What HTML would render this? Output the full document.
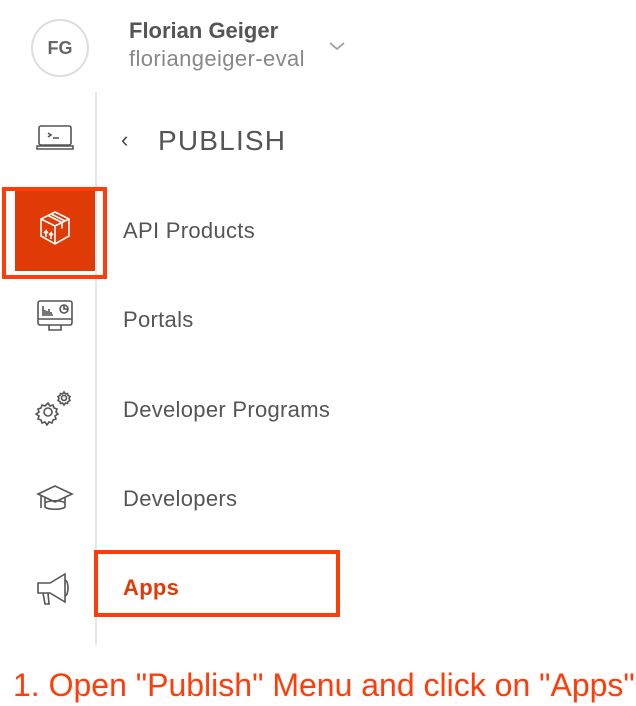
<!DOCTYPE html>
<html><head><meta charset="utf-8"><style>
*{margin:0;padding:0;box-sizing:border-box}
body{width:636px;height:706px;background:#fff;position:relative;overflow:hidden;font-family:"Liberation Sans",sans-serif;color:#555}
.a{position:absolute}
.item{position:absolute;left:123px;font-size:22px;color:#555;letter-spacing:0.3px;line-height:24px}
svg{position:absolute;fill:none;stroke:#555;stroke-width:1.6}
</style></head><body>
<div class="a" style="left:31px;top:19px;width:58px;height:58px;border:2px solid #ddd;border-radius:50%;text-align:center;line-height:54px;font-weight:bold;font-size:18px;color:#666">FG</div>
<div class="a" style="left:129px;top:18px;font-size:22px;font-weight:bold;color:#555">Florian Geiger</div>
<div class="a" style="left:129px;top:46px;font-size:22px;letter-spacing:0.4px;color:#888">floriangeiger-eval</div>
<svg style="left:328px;top:40px" width="18" height="12" viewBox="0 0 18 12"><path d="M2 3l7 6 7-6" stroke="#999"/></svg>
<div class="a" style="left:95px;top:92px;width:2px;height:553px;background:#e6e6e6"></div>
<svg style="left:36px;top:124px" width="38" height="28" viewBox="0 0 38 28"><rect x="3" y="2" width="32" height="19" rx="2"/><path d="M1 22h36v3H1z"/><path d="M12 9l3 2-3 2M17 14h6"/></svg>
<div class="a" style="left:15px;top:191px;width:80px;height:80px;background:#e03a06"></div>
<div class="a" style="left:2px;top:187px;width:105px;height:92px;border:4px solid #ff3d0b"></div>
<svg style="left:36px;top:209px;stroke:#fff;stroke-width:1.6" width="38" height="38" viewBox="0 0 38 38"><path d="M19 3l14 7v17l-14 8-14-8V10z"/><path d="M5 10l14 7 14-7M19 17v18"/><path d="M12 6.5l14 7v6M15 5l14 7"/><path d="M10 28v-6l-2 2M10 22l2 2M15 30v-6l-2 2M15 24l2 2"/></svg>
<svg style="left:36px;top:299px" width="38" height="36" viewBox="0 0 38 36"><rect x="2" y="2" width="34" height="24" rx="2"/><path d="M2 20h34M13 26v5h12v-5M7 7v9h10M9 15v-4M11 15v-3M13 15v-5M15 15v-2"/><circle cx="28" cy="10" r="4"/><path d="M28 6v4h4"/></svg>
<svg style="left:35px;top:390px" width="40" height="36" viewBox="0 0 40 36"><circle cx="13" cy="22" r="4"/><path d="M13 13l2 3 3-1 1 3 3 1-1 3 2 2-3 2 1 3-3 1-1 3-3-1-2 3-2-3-3 1-1-3-3-1 1-3-3-2 3-2-1-3 3-1 1-3 3 1z"/><circle cx="29" cy="8" r="2.5"/><path d="M29 2l1.5 2 2-.5.5 2 2 1-1 2 1 2-2 1-.5 2-2-.5-1.5 2-1.5-2-2 .5-.5-2-2-1 1-2-1-2 2-1 .5-2 2 .5z"/></svg>
<svg style="left:36px;top:484px" width="38" height="30" viewBox="0 0 38 30"><path d="M2 10l17-8 17 8-17 8z"/><path d="M9 14v9c3 3 17 3 20 0v-9M5 12v12M29 19c-4-3-16-3-20 0"/></svg>
<svg style="left:36px;top:572px" width="38" height="34" viewBox="0 0 38 34"><path d="M2 11h12l15-9v28L14 21H2z"/><path d="M29 8c4 1 4 15 0 16M7 21l2 11h4l-1-11"/></svg>
<div class="a" style="left:121px;top:127px;font-size:22px;color:#444">‹</div>
<div class="a" style="left:158px;top:125px;font-size:28px;letter-spacing:1.2px;color:#555">PUBLISH</div>
<div class="item" style="top:219px">API Products</div>
<div class="item" style="top:308px">Portals</div>
<div class="item" style="top:398px">Developer Programs</div>
<div class="item" style="top:487px">Developers</div>
<div class="item" style="top:576px;color:#e03a06;font-weight:bold">Apps</div>
<div class="a" style="left:94px;top:550px;width:246px;height:67px;border:4px solid #ff3d0b"></div>
<div class="a" style="left:13px;top:667px;font-size:32px;color:#ff3c0a;white-space:nowrap">1. Open "Publish" Menu and click on "Apps"</div>
</body></html>
